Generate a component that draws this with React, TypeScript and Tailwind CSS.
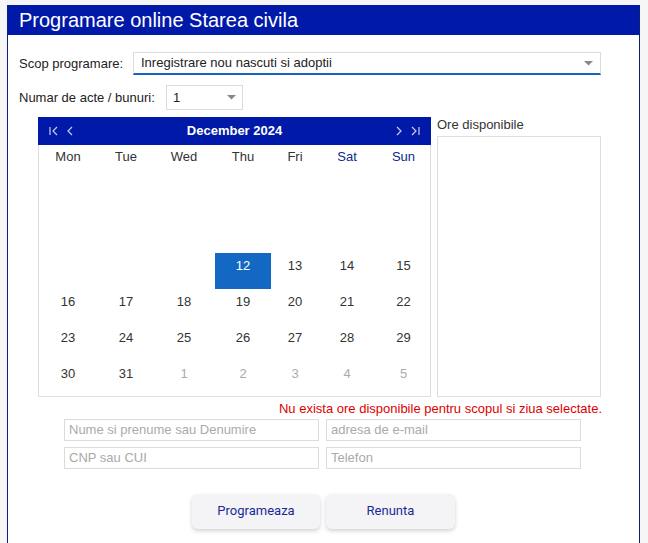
import React from "react";

const cols = ["w-[58px]", "w-[58px]", "w-[58px]", "w-[60px]", "w-[44px]", "w-[60px]", "w-[53px]"];

type Cell = { d: string; kind: "hidden" | "normal" | "sel" | "other" };

const weeks: Cell[][] = (() => {
  const rows: Cell[][] = [];
  const h = (d: number): Cell => ({ d: String(d), kind: "hidden" });
  rows.push([h(25), h(26), h(27), h(28), h(29), h(30), h(1)]);
  rows.push([h(2), h(3), h(4), h(5), h(6), h(7), h(8)]);
  rows.push([h(9), h(10), h(11), { d: "12", kind: "sel" }, { d: "13", kind: "normal" }, { d: "14", kind: "normal" }, { d: "15", kind: "normal" }]);
  const n = (a: number): Cell[] => Array.from({ length: 7 }, (_, i) => ({ d: String(a + i), kind: "normal" as const }));
  rows.push(n(16));
  rows.push(n(23));
  rows.push([
    { d: "30", kind: "normal" },
    { d: "31", kind: "normal" },
    { d: "1", kind: "other" },
    { d: "2", kind: "other" },
    { d: "3", kind: "other" },
    { d: "4", kind: "other" },
    { d: "5", kind: "other" },
  ]);
  return rows;
})();

const days = ["Mon", "Tue", "Wed", "Thu", "Fri", "Sat", "Sun"];

function Caret() {
  return (
    <svg width="9" height="5" viewBox="0 0 9 5">
      <path d="M0 0 L9 0 L4.5 4.5 Z" fill="#888" />
    </svg>
  );
}

export default function App() {
  return (
    <div className="min-h-screen bg-[#f6f6f6] pt-[5px] pl-[7px]" style={{ fontFamily: '"Liberation Sans", Arial, sans-serif' }}>
      <div className="w-[633px] min-h-[538px] border-x border-[#0d1f7a] bg-white">
        <div className="h-[30px] bg-[#0019a8] pl-[11px] text-[20px] leading-[30px] text-white">
          Programare online Starea civila
        </div>

        <div className="pl-[11px] pt-[17px]">
          <div className="flex items-center">
            <span className="w-[114px] text-[13px] text-[#222]">Scop programare:</span>
            <div className="flex h-[23px] w-[468px] items-center justify-between border border-b-2 border-[#dcdcdc] border-b-[#1565c0] pl-[7px] pr-[7px] text-[13px] text-[#222]">
              <span>Inregistrare nou nascuti si adoptii</span>
              <Caret />
            </div>
          </div>

          <div className="mt-[10px] flex items-center">
            <span className="w-[147px] text-[13px] text-[#222]">Numar de acte / bunuri:</span>
            <div className="flex h-[25px] w-[77px] items-center justify-between border border-[#dcdcdc] pl-[6px] pr-[6px] text-[13px] text-[#222]">
              <span>1</span>
              <Caret />
            </div>
          </div>

          <div className="mt-[7px] flex pl-[19px]">
            <div className="w-[393px]">
              <div className="flex h-[28px] items-center justify-between bg-[#0019a8] px-[11px] text-white">
                <div className="flex items-center gap-[9px]">
                  <svg width="9" height="10" viewBox="0 0 9 10" fill="none" stroke="#c9cdf0" strokeWidth="1.2">
                    <path d="M1 1 V9 M8 1 L4 5 L8 9" />
                  </svg>
                  <svg width="6" height="10" viewBox="0 0 6 10" fill="none" stroke="#c9cdf0" strokeWidth="1.2">
                    <path d="M5 1 L1 5 L5 9" />
                  </svg>
                </div>
                <span className="text-[13px] font-bold">December 2024</span>
                <div className="flex items-center gap-[9px]">
                  <svg width="6" height="10" viewBox="0 0 6 10" fill="none" stroke="#c9cdf0" strokeWidth="1.2">
                    <path d="M1 1 L5 5 L1 9" />
                  </svg>
                  <svg width="9" height="10" viewBox="0 0 9 10" fill="none" stroke="#c9cdf0" strokeWidth="1.2">
                    <path d="M1 1 L5 5 L1 9 M8 1 V9" />
                  </svg>
                </div>
              </div>
              <div className="h-[252px] border-x border-b border-[#dedede]">
                <div className="flex h-[36px]">
                  {days.map((d, i) => (
                    <div key={d} className={`${cols[i]} pt-[2px] text-center text-[13px] ${i >= 5 ? "text-[#0d2a8a]" : "text-[#333]"}`}>
                      {d}
                    </div>
                  ))}
                </div>
                {weeks.map((w, r) => (
                  <div key={r} className="flex h-[36px]">
                    {w.map((c, i) => (
                      <div key={i} className={`${cols[i]} flex justify-center`}>
                        {c.kind === "sel" ? (
                          <div className="mx-[2px] w-full bg-[#1368c4] pt-[3px] text-center text-[13px] text-white">{c.d}</div>
                        ) : c.kind === "hidden" ? null : (
                          <div className={`pt-[3px] text-center text-[13px] ${c.kind === "other" ? "text-[#aaa]" : "text-[#333]"}`}>{c.d}</div>
                        )}
                      </div>
                    ))}
                  </div>
                ))}
              </div>
            </div>

            <div className="ml-[6px] w-[164px]">
              <div className="h-[19px] text-[13px] leading-[15px] text-[#333]">Ore disponibile</div>
              <div className="h-[261px] border border-[#dedede]" />
            </div>
          </div>

          <div className="mt-[2px] w-[583px] text-right text-[13px] text-[#e00000]">
            Nu exista ore disponibile pentru scopul si ziua selectate.
          </div>

          <div className="ml-[45px] grid w-[517px] grid-cols-2 gap-x-[7px] gap-y-[6px]">
            {["Nume si prenume sau Denumire", "adresa de e-mail", "CNP sau CUI", "Telefon"].map((p) => (
              <input
                key={p}
                placeholder={p}
                className="h-[22px] border border-[#dcdcdc] px-[4px] text-[13px] outline-none placeholder:text-[#aaa]"
              />
            ))}
          </div>

          <div className="mt-[25px] flex justify-center gap-[6px] pr-[11px]">
            <button className="h-[35px] w-[128px] rounded-[6px] bg-[#f4f4f6] text-[13px] text-[#1a2a99] shadow-[0_2px_4px_rgba(0,0,0,0.18)]" style={{ fontFamily: 'Roboto, "Liberation Sans", sans-serif' }}>
              Programeaza
            </button>
            <button className="h-[35px] w-[129px] rounded-[6px] bg-[#f4f4f6] text-[13px] text-[#1a2a99] shadow-[0_2px_4px_rgba(0,0,0,0.18)]" style={{ fontFamily: 'Roboto, "Liberation Sans", sans-serif' }}>
              Renunta
            </button>
          </div>
        </div>
      </div>
    </div>
  );
}
